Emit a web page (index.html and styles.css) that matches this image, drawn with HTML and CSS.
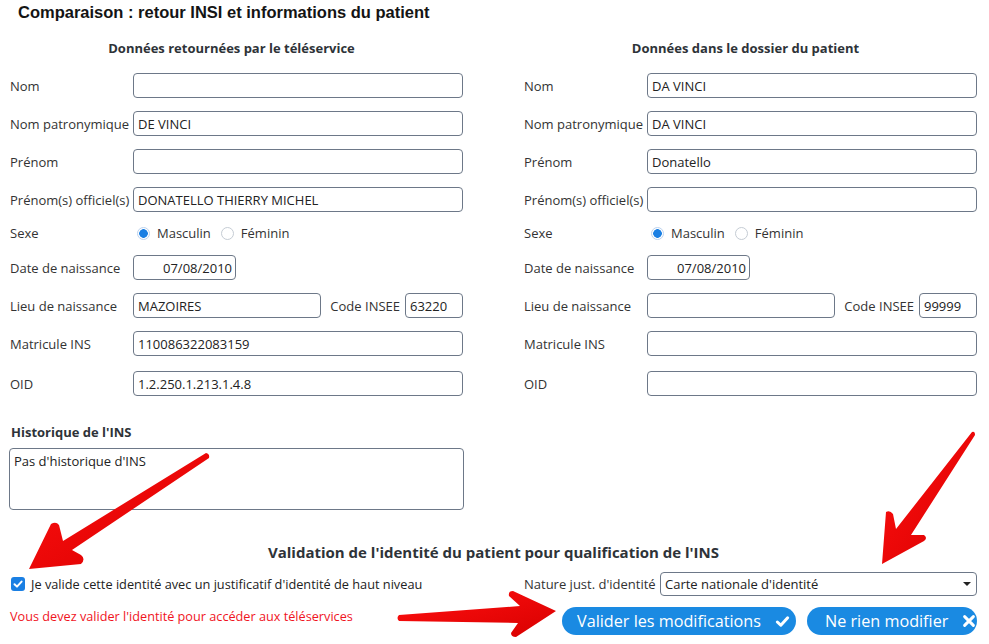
FILE: index.html
```html
<!DOCTYPE html>
<html lang="fr">
<head>
<meta charset="utf-8">
<title>Comparaison INSI</title>
<link rel="stylesheet" href="styles.css">
</head>
<body>
<div class="page">
  <h1 class="title">Comparaison : retour INSI et informations du patient</h1>
  <div class="cols">
    <section class="col">
      <h2 class="col-title">Données retournées par le téléservice</h2>
      <div class="rows">
        <div class="row"><span class="lbl">Nom</span><div class="inp"></div></div>
        <div class="row"><span class="lbl">Nom patronymique</span><div class="inp">DE VINCI</div></div>
        <div class="row"><span class="lbl">Prénom</span><div class="inp"></div></div>
        <div class="row"><span class="lbl">Prénom(s) officiel(s)</span><div class="inp">DONATELLO THIERRY MICHEL</div></div>
        <div class="row row-sexe"><span class="lbl">Sexe</span>
          <div class="radios">
            <span class="radio on"></span><span class="rlabel">Masculin</span>
            <span class="radio"></span><span class="rlabel">Féminin</span>
          </div>
        </div>
        <div class="row"><span class="lbl">Date de naissance</span><div class="inp date">07/08/2010</div></div>
        <div class="row"><span class="lbl">Lieu de naissance</span><div class="inp">MAZOIRES</div><span class="lbl2">Code INSEE</span><div class="inp insee">63220</div></div>
        <div class="row"><span class="lbl">Matricule INS</span><div class="inp">110086322083159</div></div>
        <div class="row row-oid"><span class="lbl">OID</span><div class="inp">1.2.250.1.213.1.4.8</div></div>
      </div>
    </section>
    <section class="col">
      <h2 class="col-title">Données dans le dossier du patient</h2>
      <div class="rows">
        <div class="row"><span class="lbl">Nom</span><div class="inp">DA VINCI</div></div>
        <div class="row"><span class="lbl">Nom patronymique</span><div class="inp">DA VINCI</div></div>
        <div class="row"><span class="lbl">Prénom</span><div class="inp">Donatello</div></div>
        <div class="row"><span class="lbl">Prénom(s) officiel(s)</span><div class="inp"></div></div>
        <div class="row row-sexe"><span class="lbl">Sexe</span>
          <div class="radios">
            <span class="radio on"></span><span class="rlabel">Masculin</span>
            <span class="radio"></span><span class="rlabel">Féminin</span>
          </div>
        </div>
        <div class="row"><span class="lbl">Date de naissance</span><div class="inp date">07/08/2010</div></div>
        <div class="row"><span class="lbl">Lieu de naissance</span><div class="inp"></div><span class="lbl2">Code INSEE</span><div class="inp insee">99999</div></div>
        <div class="row"><span class="lbl">Matricule INS</span><div class="inp"></div></div>
        <div class="row row-oid"><span class="lbl">OID</span><div class="inp"></div></div>
      </div>
    </section>
  </div>

  <div class="history">
    <h3 class="hist-title">Historique de l'INS</h3>
    <div class="hist-box">Pas d'historique d'INS</div>
  </div>

  <h2 class="valid-title">Validation de l'identité du patient pour qualification de l'INS</h2>

  <div class="cols bottom">
    <div class="bcol">
      <div class="brow">
        <span class="check"><svg viewBox="0 0 14 14" width="14" height="14"><path d="M3.5 7.2 L6 9.6 L10.6 4.6" fill="none" stroke="#fff" stroke-width="2" stroke-linecap="round" stroke-linejoin="round"/></svg></span>
        <span class="check-text">Je valide cette identité avec un justificatif d'identité de haut niveau</span>
      </div>
      <div class="brow2"><span class="warn">Vous devez valider l'identité pour accéder aux téléservices</span></div>
    </div>
    <div class="bcol">
      <div class="brow">
        <span class="nat-lbl">Nature just. d'identité</span>
        <div class="select">Carte nationale d'identité<span class="caret"></span></div>
      </div>
      <div class="brow2 buttons">
        <button class="btn btn-ok">Valider les modifications
          <svg class="ico" viewBox="0 0 16 16" width="15" height="15"><path d="M2.5 8.5 L6.2 12 L13.5 4" fill="none" stroke="#fff" stroke-width="3.2" stroke-linecap="round" stroke-linejoin="round"/></svg>
        </button>
        <button class="btn btn-no">Ne rien modifier
          <svg class="ico" viewBox="0 0 16 16" width="14" height="14"><path d="M3 3 L13 13 M13 3 L3 13" fill="none" stroke="#fff" stroke-width="3.4" stroke-linecap="round"/></svg>
        </button>
      </div>
    </div>
  </div>

  <svg class="arrows" viewBox="0 0 989 644" width="989" height="644">
    <defs>
      <linearGradient id="rg" x1="0" y1="0" x2="1" y2="1">
        <stop offset="0" stop-color="#ff1010"/>
        <stop offset="1" stop-color="#d80000"/>
      </linearGradient>
    </defs>
    <path d="M206 453 L63 541 L59 525 Q56 521 51 524 L29 569 L81 564 Q86 559 81 555 L72 550 L209 458 Q210 454 206 453 Z" fill="url(#rg)"/>
    <path d="M972 432 L896 529 L893 514 Q890 510 886 512 L882 564 L924 541 Q928 538 924 535 L911 535 L975 435 Q975 431 972 432 Z" fill="url(#rg)"/>
    <path d="M399 615 L520 606 L509 596 Q508 591 513 591 L556 611 L516 637 Q511 637 511 633 L518 623 L399 621 Q396 618 399 615 Z" fill="url(#rg)"/>
  </svg>
</div>
</body>
</html>
```

FILE: styles.css
```css
html, body {
  margin: 0;
  padding: 0;
  background: #fff;
}
body {
  font-family: "Open Sans", "DejaVu Sans", sans-serif;
  font-size: 13px;
  color: #333;
}
.page {
  position: relative;
  width: 989px;
  height: 644px;
  padding: 0 12px 0 10px;
  box-sizing: border-box;
  overflow: hidden;
}
.title {
  margin: 0;
  padding: 2px 0 0 8px;
  font: bold 16.5px/20px "Liberation Sans", Arial, sans-serif;
  color: #141414;
}
.cols {
  display: grid;
  grid-template-columns: 453px 453px;
  column-gap: 61px;
}
.col-title {
  margin: 17px 0 16px;
  padding-right: 10px;
  font-size: 13px;
  line-height: 18px;
  font-weight: 700;
  text-align: center;
  color: #2e3338;
}
.rows {
  display: flex;
  flex-direction: column;
  gap: 13px;
}
.row {
  display: flex;
  align-items: center;
  height: 25px;
}
.row-sexe {
  height: 16px;
  margin-bottom: 1px;
}
.row-oid {
  margin-top: 2px;
}
.lbl {
  flex: none;
  width: 123px;
  white-space: nowrap;
}
.lbl2 {
  flex: none;
  margin: 0 5px 0 9px;
  white-space: nowrap;
}
.inp {
  flex: 1;
  height: 25px;
  box-sizing: border-box;
  border: 1px solid #6d7888;
  border-radius: 4px;
  padding: 0 4px;
  display: flex;
  align-items: center;
  color: #222;
  white-space: nowrap;
  overflow: hidden;
}
.inp.date {
  flex: none;
  width: 103px;
  justify-content: flex-end;
  padding-right: 3px;
}
.inp.insee {
  flex: none;
  width: 58px;
}
.radios {
  display: flex;
  align-items: center;
  padding-left: 4px;
}
.radio {
  width: 13px;
  height: 13px;
  box-sizing: border-box;
  border-radius: 50%;
  border: 1px solid #c5ccd4;
  background: #fff;
}
.radio.on {
  border-color: #bcd2ee;
  background: radial-gradient(circle, #1a7fe3 0 4px, #fff 4.6px);
}
.rlabel {
  margin: 0 10px 0 7px;
}
.history {
  margin-top: 28px;
}
.hist-title {
  margin: 0;
  padding-left: 1px;
  font-size: 13px;
  line-height: 17px;
  font-weight: 700;
  color: #2e3338;
}
.hist-box {
  margin: 7px 0 0 -1px;
  width: 455px;
  height: 62px;
  box-sizing: border-box;
  border: 1px solid #6d7888;
  border-radius: 4px;
  padding: 3px 4px;
  color: #222;
}
.valid-title {
  margin: 32px 0 0;
  font-size: 15px;
  line-height: 20px;
  font-weight: 700;
  text-align: center;
  color: #2e3338;
}
.bottom {
  margin-top: 10px;
}
.brow {
  display: flex;
  align-items: center;
  height: 24px;
}
.brow2 {
  margin-top: 11px;
  height: 28px;
  display: flex;
}
.check {
  width: 14px;
  height: 14px;
  margin-left: 1px;
  border-radius: 3px;
  background: #1a7fe3;
  display: flex;
}
.check-text {
  margin-left: 6px;
  font-size: 12.75px;
  color: #222;
}
.warn {
  font-size: 12.7px;
  line-height: 18px;
  color: #f0141e;
}
.nat-lbl {
  flex: none;
  width: 136px;
  white-space: nowrap;
}
.select {
  position: relative;
  flex: 1;
  height: 24px;
  box-sizing: border-box;
  border: 1px solid #6d7888;
  border-radius: 4px;
  padding: 0 4px;
  display: flex;
  align-items: center;
  color: #222;
}
.caret {
  position: absolute;
  right: 5px;
  top: 9px;
  width: 0;
  height: 0;
  border-left: 4px solid transparent;
  border-right: 4px solid transparent;
  border-top: 4px solid #222;
}
.buttons {
  justify-content: flex-end;
  gap: 11px;
}
.btn {
  height: 28px;
  border: none;
  border-radius: 14px;
  background: #1a8ae2;
  color: #fff;
  font-family: "Open Sans", sans-serif;
  font-size: 16.2px;
  display: flex;
  align-items: center;
  justify-content: space-between;
  padding: 0 6px 0 15px;
  margin: 0;
}
.btn-ok {
  width: 234px;
}
.btn-no {
  width: 170px;
  padding-left: 18px;
  padding-right: 1px;
}
.ico {
  flex: none;
}
.arrows {
  position: absolute;
  left: 0;
  top: 0;
  pointer-events: none;
}
```
